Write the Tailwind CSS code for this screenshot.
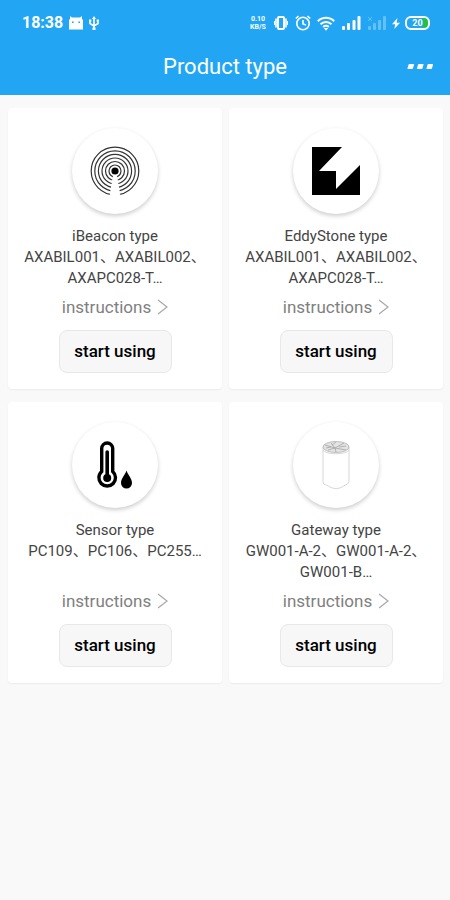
<!DOCTYPE html>
<html lang="en">
<head>
<meta charset="utf-8">
<meta name="viewport" content="width=device-width, initial-scale=1">
<title>Product type</title>
<script src="https://cdn.jsdelivr.net/npm/@tailwindcss/browser@4"></script>
</head>
<body class="min-h-screen bg-[#f9f9f9] font-['Roboto','Noto_Sans_CJK_SC',sans-serif] text-[#444]">
<header class="bg-[#22a6f3] text-white">
  <div class="flex h-[46px] items-center justify-between pl-[22px] pr-5">
    <div class="flex items-center gap-[6px]">
      <span class="text-[16px] font-bold leading-5">18:38</span>
      <svg class="h-[14px] w-[14px]" viewBox="0 0 14 14" fill="currentColor" aria-hidden="true"><path d="M1 0l2 1.600h8L13 0v3l1 1v9.500H0V4l1-1z"/><path d="M3 5.500h1.600v1.600H3zM9.400 5.500H11v1.600H9.400z" fill="#22a6f3"/></svg>
      <svg class="h-[14px] w-[10px]" viewBox="0 0 10 14" fill="none" stroke="currentColor" stroke-width="1.600" aria-hidden="true"><path d="M5 1v12M1 4.500v3L5 10l4-2.500v-3"/><path d="M3 3l2-3 2 3zM0 3.500h2.400v2H0zM7.600 3.500H10v2H7.600zM3.500 11.500h3V14h-3z" fill="currentColor" stroke="none"/></svg>
    </div>
    <div class="flex items-center">
      <span class="flex w-[18px] flex-col items-center text-[7px] font-bold leading-[8px]"><span>0.10</span><span>KB/S</span></span>
      <svg class="ml-[7px] h-[14px] w-[14px]" viewBox="0 0 14 14" fill="none" stroke="currentColor" aria-hidden="true"><rect x="4" y="1" width="6" height="12" rx="1" stroke-width="2"/><path d="M2 2.500v9M12 2.500v9" stroke-width="1.600"/><path d="M.5 5v4M13.500 5v4"/></svg>
      <svg class="ml-[7px] h-4 w-4" viewBox="0 0 16 16" fill="none" stroke="currentColor" stroke-width="1.600" aria-hidden="true"><circle cx="8" cy="8.500" r="6.200"/><path d="M8 5v4l3 1M.8 3.500L3.500 1M15.200 3.500L12.500 1"/></svg>
      <svg class="ml-[6px] h-[15px] w-[18px]" viewBox="0 0 18 15" fill="none" stroke="currentColor" stroke-width="2" aria-hidden="true"><path d="M.8 5.200a11.600 11.600 0 0 1 16.400 0M3.500 8.200a7.800 7.800 0 0 1 11 0M6.200 11a4 4 0 0 1 5.600 0"/><path d="M6.800 12L9 14.800 11.200 12z" fill="currentColor" stroke="none"/></svg>
      <svg class="ml-[7px] h-[14px] w-[19px]" viewBox="0 0 19 14" fill="currentColor" aria-hidden="true"><rect y="10" width="3" height="4" rx="1"/><rect x="5" y="7" width="3" height="7" rx="1"/><rect x="10.500" y="4" width="3" height="10" rx="1"/><rect x="15.500" width="3" height="14" rx="1"/></svg>
      <svg class="ml-[7px] h-[14px] w-[18px] text-white/30" viewBox="0 0 18 14" fill="currentColor" aria-hidden="true"><rect y="10" width="3" height="4" rx="1"/><rect x="5" y="7" width="3" height="7" rx="1"/><rect x="10" y="4" width="3" height="10" rx="1"/><rect x="15" width="3" height="14" rx="1"/><path d="M0 1l4 4M4 1L0 5" stroke="currentColor"/></svg>
      <svg class="ml-[6px] h-[11px] w-[8px]" viewBox="0 0 8 11" fill="currentColor" aria-hidden="true"><path d="M5.500 0L0 6.200h3.200L2.300 11 8 4.700H4.600z"/></svg>
      <span class="ml-[5px] flex h-[14px] w-[25px] items-center justify-center rounded-[6px] border-2 border-white bg-[linear-gradient(90deg,transparent_76%,#1fc43a_76%)] text-[9px] font-bold leading-none">20</span>
    </div>
  </div>
  <div class="grid h-[49px] grid-cols-[1fr_auto_1fr] items-center px-4 pb-[8px]">
    <h1 class="col-start-2 text-[22px] leading-7">Product type</h1>
    <button type="button" aria-label="More options" class="flex h-6 w-8 items-center justify-end justify-self-end">
      <svg class="h-[5px] w-[27px]" viewBox="0 0 27 5" fill="currentColor" aria-hidden="true"><path d="M2.500 0h4q.8 0 .5.800l-1 3.400q-.2.800-1 .8H1q-.8 0-.5-.8l1-3.400Q1.700 0 2.500 0zM12 0h4q.8 0 .5.800l-1 3.400q-.2.800-1 .8h-4q-.8 0-.5-.8l1-3.400q.2-.8 1-.8zM21.500 0h4q.8 0 .5.800l-1 3.400q-.2.800-1 .8h-4q-.8 0-.5-.8l1-3.400q.2-.8 1-.8z"/></svg>
    </button>
  </div>
</header>

<main class="grid grid-cols-2 gap-x-[7px] gap-y-[13px] pl-2 pr-[7px] pt-[13px]">
  <article class="flex flex-col items-center rounded bg-white px-3 pb-4 pt-5 shadow-[0_1px_2px_rgba(0,0,0,0.06)]">
    <div class="flex h-[86px] w-[86px] items-center justify-center rounded-full bg-white shadow-[0_2px_4px_rgba(0,0,0,0.2)]">
      <svg class="h-[50px] w-[50px]" viewBox="0 0 50 50" aria-hidden="true"><g fill="none" stroke="#333" stroke-width="1.200"><circle cx="25" cy="25" r="23.800"/><circle cx="25" cy="25" r="20.200"/><circle cx="25" cy="25" r="16.600"/><circle cx="25" cy="25" r="13"/><circle cx="25" cy="25" r="9.500"/><circle cx="25" cy="25" r="6"/></g><path d="M24 27l-4 23h10l-4-23z" fill="#fff" stroke="#fff" stroke-width="1"/><circle cx="25" cy="25" r="3.600"/></svg>
    </div>
    <h2 class="mt-3 text-[15px] leading-[21px]">iBeacon type</h2>
    <p class="h-[42px] text-center text-[15px] leading-[21px]">AXABIL001、AXABIL002、<br>AXAPC028-T…</p>
    <a href="#" class="mt-[6px] flex items-center gap-[5px] text-[17px] leading-6 text-[#808080]">instructions
      <svg class="h-4 w-3" viewBox="0 0 12 16" fill="none" stroke="#aaa" stroke-width="1.300" aria-hidden="true"><path d="M2 1l9 7-9 7"/></svg></a>
    <button type="button" class="mt-[11px] h-[43px] w-[113px] rounded-lg border border-[#e8e8e8] bg-[#f7f7f7] text-[17px] font-medium text-black">start using</button>
  </article>

  <article class="flex flex-col items-center rounded bg-white px-3 pb-4 pt-5 shadow-[0_1px_2px_rgba(0,0,0,0.06)]">
    <div class="flex h-[86px] w-[86px] items-center justify-center rounded-full bg-white shadow-[0_2px_4px_rgba(0,0,0,0.2)]">
      <svg class="h-12 w-12" viewBox="0 0 48 48" aria-hidden="true"><path d="M0 0h30L7 24h17v18l24-24v30H0z"/></svg>
    </div>
    <h2 class="mt-3 text-[15px] leading-[21px]">EddyStone type</h2>
    <p class="h-[42px] text-center text-[15px] leading-[21px]">AXABIL001、AXABIL002、<br>AXAPC028-T…</p>
    <a href="#" class="mt-[6px] flex items-center gap-[5px] text-[17px] leading-6 text-[#808080]">instructions
      <svg class="h-4 w-3" viewBox="0 0 12 16" fill="none" stroke="#aaa" stroke-width="1.300" aria-hidden="true"><path d="M2 1l9 7-9 7"/></svg></a>
    <button type="button" class="mt-[11px] h-[43px] w-[113px] rounded-lg border border-[#e8e8e8] bg-[#f7f7f7] text-[17px] font-medium text-black">start using</button>
  </article>

  <article class="flex flex-col items-center rounded bg-white px-3 pb-4 pt-5 shadow-[0_1px_2px_rgba(0,0,0,0.06)]">
    <div class="flex h-[86px] w-[86px] items-center justify-center rounded-full bg-white shadow-[0_2px_4px_rgba(0,0,0,0.2)]">
      <svg class="h-12 w-[36px]" viewBox="0 0 36 48" aria-hidden="true"><path d="M4.700 30.500V7.500a5.500 5.500 0 0 1 11 0v23a8.300 8.300 0 1 1-11 0z" fill="none" stroke="#000" stroke-width="3.400"/><path d="M10.200 11v26" stroke="#000" stroke-width="3.600" stroke-linecap="round"/><circle cx="10.200" cy="37" r="4"/><path d="M29.500 29.500c1.500 4.500 5.500 8 5.500 12.500a5.500 5.500 0 0 1-11 0c0-4.500 4-8 5.500-12.500z"/></svg>
    </div>
    <h2 class="mt-3 text-[15px] leading-[21px]">Sensor type</h2>
    <p class="h-[42px] text-center text-[15px] leading-[21px]">PC109、PC106、PC255…</p>
    <a href="#" class="mt-[6px] flex items-center gap-[5px] text-[17px] leading-6 text-[#808080]">instructions
      <svg class="h-4 w-3" viewBox="0 0 12 16" fill="none" stroke="#aaa" stroke-width="1.300" aria-hidden="true"><path d="M2 1l9 7-9 7"/></svg></a>
    <button type="button" class="mt-[11px] h-[43px] w-[113px] rounded-lg border border-[#e8e8e8] bg-[#f7f7f7] text-[17px] font-medium text-black">start using</button>
  </article>

  <article class="flex flex-col items-center rounded bg-white px-3 pb-4 pt-5 shadow-[0_1px_2px_rgba(0,0,0,0.06)]">
    <div class="flex h-[86px] w-[86px] items-center justify-center rounded-full bg-white shadow-[0_2px_4px_rgba(0,0,0,0.2)]">
      <svg class="h-[50px] w-[28px]" viewBox="0 0 28 50" fill="none" stroke="#ccc" aria-hidden="true"><path d="M1 7v36c1 2 5 2 7 4 3 2 9 2 12 0 2-2 6-2 7-5V7" stroke-width=".8"/><ellipse cx="14" cy="7" rx="13" ry="5.500" fill="#e3e3e3" stroke="#b4b4b4" stroke-width=".8"/><path d="M3 5l10 3 9-5M6 10l7-2 11 2M9 3l4 5 1 4M14 2l-4 3M17 7l7-1M4 8l5-1" stroke="#a4a4a4" stroke-width=".8"/><path d="M1 10c2 5 24 5 26 0" stroke-width=".8"/></svg>
    </div>
    <h2 class="mt-3 text-[15px] leading-[21px]">Gateway type</h2>
    <p class="h-[42px] text-center text-[15px] leading-[21px]">GW001-A-2、GW001-A-2、<br>GW001-B…</p>
    <a href="#" class="mt-[6px] flex items-center gap-[5px] text-[17px] leading-6 text-[#808080]">instructions
      <svg class="h-4 w-3" viewBox="0 0 12 16" fill="none" stroke="#aaa" stroke-width="1.300" aria-hidden="true"><path d="M2 1l9 7-9 7"/></svg></a>
    <button type="button" class="mt-[11px] h-[43px] w-[113px] rounded-lg border border-[#e8e8e8] bg-[#f7f7f7] text-[17px] font-medium text-black">start using</button>
  </article>
</main>
</body>
</html>
